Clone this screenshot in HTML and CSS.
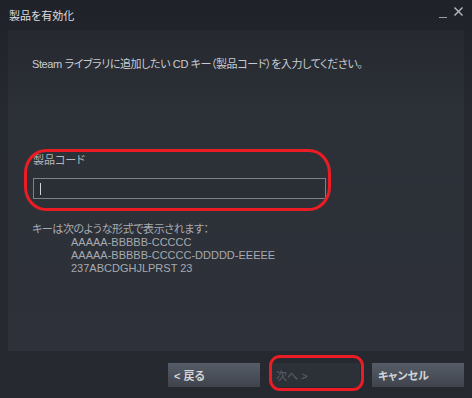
FILE: index.html
```html
<!DOCTYPE html>
<html lang="ja">
<head>
  <meta charset="UTF-8" />
  <title>製品を有効化</title>
  <link rel="stylesheet" href="styles.css">
</head>
<body>

<div class="window">
  <header class="titlebar">
    <span class="title">製品を有効化</span>
    <span class="controls">
      <span class="min"></span>
      <svg class="close" width="9" height="9" viewBox="0 0 9 9"><path d="M0.5 0.5 L8.5 8.5 M8.5 0.5 L0.5 8.5" stroke="#b8bcc2" stroke-width="1.4" fill="none"/></svg>
    </span>
  </header>

  <main class="panel">
    <p class="intro">Steam ライブラリに追加したい CD キー（製品コード）を入力してください。</p>

    <div class="field">
      <label for="code">製品コード</label>
      <div class="input"><span class="caret"></span></div>
      <div class="mark mark-field"></div>
    </div>

    <div class="format">
      <p>キーは次のような形式で表示されます：</p>
      <ul>
        <li>AAAAA-BBBBB-CCCCC</li>
        <li>AAAAA-BBBBB-CCCCC-DDDDD-EEEEE</li>
        <li>237ABCDGHJLPRST 23</li>
      </ul>
    </div>
  </main>

  <footer class="buttons">
    <button class="btn">&lt; 戻る</button>
    <button class="btn btn-disabled">次へ &gt;<span class="mark mark-next"></span></button>
    <button class="btn">キャンセル</button>
  </footer>
</div>

</body>
</html>
```

FILE: styles.css
```css
*, *::before, *::after { margin: 0; padding: 0; box-sizing: border-box; }
body {
  font-family: 'Liberation Sans', 'Noto Sans CJK JP', sans-serif;
  font-feature-settings: "palt";
  background: #262930;
  color: #c6cacf;
  width: 472px;
  height: 398px;
  overflow: hidden;
}
.window {
  height: 398px;
  display: flex;
  flex-direction: column;
  background: linear-gradient(to bottom, #1f2229 0, #262930 120px);
}
.titlebar {
  height: 30px;
  display: flex;
  align-items: center;
  justify-content: space-between;
  padding: 0 9px 0 9px;
}
.title {
  font-size: 11px;
  color: #dcdee0;
  margin-top: -1px;
}
.controls {
  display: flex;
  align-items: flex-start;
  gap: 7px;
  margin-top: -5px;
}
.min {
  width: 8px;
  height: 1px;
  background: #9a9ea4;
  margin-top: 10px;
}
.panel {
  height: 321px;
  margin: 0 8px;
  padding: 26px 24px 0;
  background: linear-gradient(to bottom, #262930 0, #2c3037 90px, #2e3139 100%);
}
.intro {
  font-size: 11px;
  color: #c8ccd2;
  line-height: 16px;
  letter-spacing: -0.4px;
  white-space: nowrap;
}
.field {
  position: relative;
  margin-top: 81px;
  padding-left: 1px;
}
.field label {
  display: block;
  font-size: 11px;
  color: #b4b9bf;
  line-height: 14px;
}
.input {
  margin-top: 11px;
  width: 293px;
  height: 21px;
  border: 1px solid #7d828a;
  background: #2a2e35;
  padding: 3px 6px;
}
.caret {
  display: block;
  width: 1px;
  height: 12px;
  margin-top: 1px;
  background: #d0d4d8;
}
.mark {
  position: absolute;
  border: 3px solid #ec1c24;
  pointer-events: none;
}
.mark-field {
  left: -8px;
  top: -4px;
  width: 307px;
  height: 62px;
  border-radius: 22px / 24px;
}
.format {
  margin-top: 24px;
  font-size: 11px;
  line-height: 13px;
  color: #a6abb1;
}
.format p {
  letter-spacing: -0.4px;
}
.format ul {
  list-style: none;
  padding-left: 39px;
}
.buttons {
  display: flex;
  justify-content: flex-end;
  gap: 12px;
  padding: 12px 8px 0;
}
.btn {
  position: relative;
  width: 92px;
  height: 24px;
  border: none;
  text-align: left;
  padding: 0 6px;
  font-family: 'Liberation Sans', 'Noto Sans CJK JP', sans-serif;
  font-feature-settings: "palt";
  font-size: 11px;
  font-weight: 600;
  color: #d2d5d9;
  background: linear-gradient(to bottom, #575d68, #3e434c);
}
.btn-disabled {
  background: #2c3037;
  color: #5f646c;
  font-weight: normal;
  width: 88px;
  padding: 0 4px;
}
.mark-next {
  left: -3px;
  top: -8px;
  width: 95px;
  height: 36px;
  border-radius: 11px;
}
```
